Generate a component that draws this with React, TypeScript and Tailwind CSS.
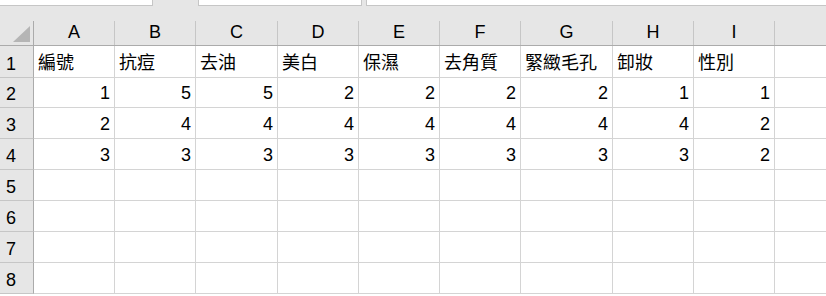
const cols = [
  { key: "A", w: "w-[81px]" },
  { key: "B", w: "w-[81px]" },
  { key: "C", w: "w-[82px]" },
  { key: "D", w: "w-[81px]" },
  { key: "E", w: "w-[81px]" },
  { key: "F", w: "w-[81px]" },
  { key: "G", w: "w-[92px]" },
  { key: "H", w: "w-[81px]" },
  { key: "I", w: "w-[81px]" },
]

const headers = ["編號", "抗痘", "去油", "美白", "保濕", "去角質", "緊緻毛孔", "卸妝", "性別"]

const data = [
  [1, 5, 5, 2, 2, 2, 2, 1, 1],
  [2, 4, 4, 4, 4, 4, 4, 4, 2],
  [3, 3, 3, 3, 3, 3, 3, 3, 2],
]

const rowHeights = ["h-[32px]", "h-[30px]", "h-[31px]", "h-[31px]", "h-[31px]", "h-[31px]", "h-[31px]", "h-[31px]"]

export default function App() {
  const font = { fontFamily: '"Liberation Sans", "Noto Sans CJK TC", sans-serif' }

  return (
    <div className="w-[826px] h-[296px] overflow-hidden bg-white text-black text-[18px]" style={font}>
      {/* top strip with input boxes */}
      <div className="flex h-[6px] bg-[#e6e6e6]">
        <div className="w-[153px] bg-white border-b border-r border-[#c6c6c6]" />
        <div className="w-[45px]" />
        <div className="w-[164px] bg-white border-b border-x border-[#c6c6c6]" />
        <div className="w-[4px]" />
        <div className="flex-1 bg-white border-b border-l border-[#c6c6c6]" />
      </div>

      {/* column headers */}
      <div className="flex h-[40px] bg-[#e6e6e6] border-b border-[#ababab]">
        <div className="w-[34px] shrink-0 relative border-r border-[#ababab] mt-[15px]">
          <div className="absolute right-[3px] bottom-[3px] w-0 h-0 border-l-[17px] border-l-transparent border-b-[16px] border-b-[#b5b5b5]" />
        </div>
        {cols.map((c) => (
          <div
            key={c.key}
            className={`${c.w} shrink-0 flex flex-col`}
          >
            <div className="flex-1 border-r border-[#c6c6c6] mt-[15px] flex items-center justify-center leading-none pb-[2px]">
              {c.key}
            </div>
          </div>
        ))}
        <div className="w-[81px] shrink-0 flex flex-col">
          <div className="flex-1 border-r border-[#c6c6c6] mt-[15px]" />
        </div>
      </div>

      {/* rows */}
      {rowHeights.map((h, r) => (
        <div key={r} className={`flex ${h}`}>
          <div className="w-[34px] shrink-0 bg-[#e6e6e6] border-r border-b border-r-[#ababab] border-b-[#c6c6c6] flex items-end pl-[6px] pb-[4px] leading-none">
            {r + 1}
          </div>
          {cols.map((c, ci) => {
            let content: React.ReactNode = null
            let align = "justify-end pr-[4px]"
            if (r === 0) {
              content = headers[ci]
              align = "justify-start pl-[4px]"
            } else if (r >= 1 && r <= 3) {
              content = data[r - 1][ci]
            }
            return (
              <div
                key={c.key}
                className={`${c.w} shrink-0 border-r border-b border-[#d4d4d4] flex items-end pb-[5px] leading-none whitespace-nowrap ${align}`}
              >
                {content}
              </div>
            )
          })}
          <div className="w-[81px] shrink-0 border-r border-b border-[#d4d4d4]" />
        </div>
      ))}
    </div>
  )
}
